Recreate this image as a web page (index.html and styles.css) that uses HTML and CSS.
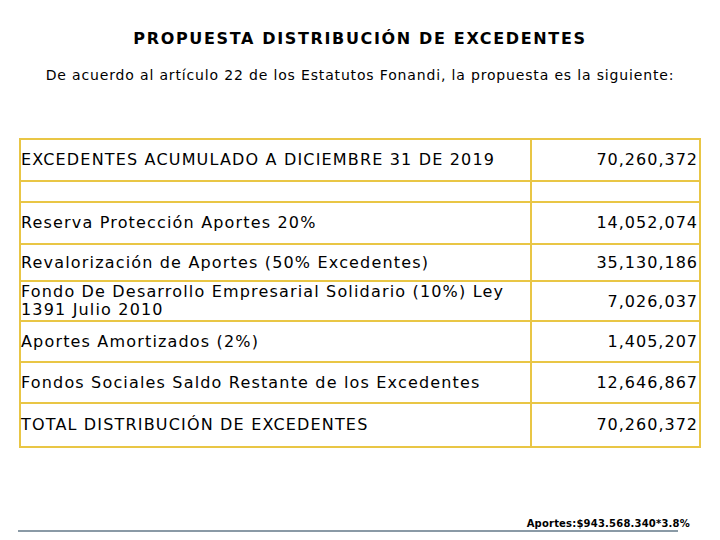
FILE: index.html
```html
<!DOCTYPE html>
<html lang="es">
<head>
<meta charset="utf-8">
<link rel="stylesheet" href="styles.css">
</head>
<body>
<div class="page">
  <h1 class="title">PROPUESTA DISTRIBUCIÓN DE EXCEDENTES</h1>
  <p class="intro">De acuerdo al artículo 22 de los Estatutos Fonandi, la propuesta es la siguiente:</p>
  <table class="dist">
    <tr class="r1"><td class="lbl">EXCEDENTES ACUMULADO A DICIEMBRE 31 DE 2019</td><td class="num">70,260,372</td></tr>
    <tr class="r2"><td class="lbl"></td><td class="num"></td></tr>
    <tr class="r3"><td class="lbl">Reserva Protección Aportes 20%</td><td class="num">14,052,074</td></tr>
    <tr class="r4"><td class="lbl">Revalorización de Aportes (50% Excedentes)</td><td class="num">35,130,186</td></tr>
    <tr class="r5"><td class="lbl two">Fondo De Desarrollo Empresarial Solidario (10%) Ley<br>1391 Julio 2010</td><td class="num low">7,026,037</td></tr>
    <tr class="r6"><td class="lbl">Aportes Amortizados (2%)</td><td class="num">1,405,207</td></tr>
    <tr class="r7"><td class="lbl">Fondos Sociales Saldo Restante de los Excedentes</td><td class="num">12,646,867</td></tr>
    <tr class="r8"><td class="lbl">TOTAL DISTRIBUCIÓN DE EXCEDENTES</td><td class="num">70,260,372</td></tr>
  </table>
  <div class="foot">
    <span class="note">Aportes:$943.568.340*3.8%</span>
    <div class="rule"></div>
  </div>
</div>
</body>
</html>
```
FILE: styles.css
```css
html, body {
  margin: 0;
  padding: 0;
  background: #ffffff;
}
.page {
  width: 720px;
  height: 540px;
  position: relative;
  font-family: "DejaVu Sans", Verdana, sans-serif;
  color: #000;
}
.title {
  margin: 0;
  padding-top: 30px;
  font-size: 16px;
  font-weight: bold;
  text-align: center;
  line-height: 18px;
  letter-spacing: 1.65px;
}
.intro {
  margin: 0;
  padding-top: 19px;
  font-size: 14px;
  text-align: center;
  line-height: 16px;
  letter-spacing: 0.84px;
}
.dist {
  margin: 55px 0 0 19px;
  width: 682px;
  border-collapse: collapse;
  font-size: 16px;
  letter-spacing: 1.17px;
}
.dist td {
  border: 2px solid #e9c645;
  padding: 0 1px 0 0;
  vertical-align: middle;
  line-height: 18px;
}
.dist .lbl { width: 508px; }
.dist .num { text-align: right; letter-spacing: 1px; }
.dist .low { padding-top: 2px; }
.r1 td { height: 40px; }
.r2 td { height: 19px; }
.r3 td { height: 40px; }
.r4 td { height: 35px; }
.r5 td { height: 36px; }
.r6 td { height: 39px; }
.r7 td { height: 39px; }
.r8 td { height: 42px; }
.foot {
  position: relative;
  margin: 82px 0 0 18px;
  width: 660px;
}
.note {
  position: absolute;
  right: -12px;
  bottom: 3px;
  font-size: 10px;
  font-weight: bold;
  letter-spacing: 0.2px;
  white-space: nowrap;
}
.rule {
  height: 0;
  border-top: 2px solid #8a9aa6;
}
```
